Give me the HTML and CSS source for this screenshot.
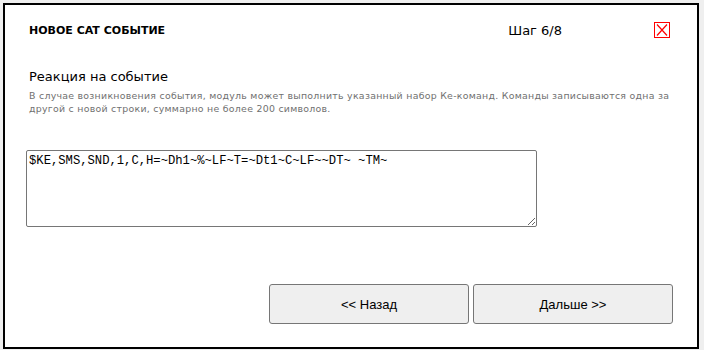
FILE: index.html
```html
<!DOCTYPE html>
<html lang="ru">
<head>
  <meta charset="UTF-8">
  <title>Новое CAT событие</title>
  <link rel="stylesheet" href="styles.css">
</head>
<body>
  <div class="dialog">
    <div class="header">
      <div class="title">НОВОЕ CAT СОБЫТИЕ</div>
      <div class="step">Шаг 6/8</div>
      <div class="close" title="Закрыть">
        <svg width="16" height="16" viewBox="0 0 16 16">
          <rect x="0.5" y="0.5" width="15" height="15" fill="none" stroke="#ff0000"/>
          <path d="M3 2.5 L13 13.5 M13 2.5 L3 13.5" stroke="#ff0000" stroke-width="1.2" fill="none"/>
        </svg>
      </div>
    </div>
    <div class="section">
      <h2>Реакция на событие</h2>
      <p class="hint">В случае возникновения события, модуль может выполнить указанный набор Ке-команд. Команды записываются одна за другой с новой строки, суммарно не более 200 символов.</p>
    </div>
    <textarea id="commands" spellcheck="false">$KE,SMS,SND,1,C,H=~Dh1~%~LF~T=~Dt1~C~LF~~DT~ ~TM~</textarea>
    <div class="buttons">
      <button type="button" id="prevBtn">&lt;&lt; Назад</button>
      <button type="button" id="nextBtn">Дальше &gt;&gt;</button>
    </div>
  </div>
</body>
</html>
```

FILE: styles.css
```css
body {
  margin: 0;
  padding: 0;
  background: #efefef;
  font-family: 'DejaVu Sans', Verdana, sans-serif;
}
.dialog {
  margin: 3px;
  width: 696px;
  height: 346px;
  box-sizing: border-box;
  border: 2px solid #000;
  background: #fff;
  display: flex;
  flex-direction: column;
}
.header {
  display: flex;
  align-items: center;
  padding: 17px 0 0 24px;
  height: 16px;
}
.title {
  flex: 1;
  font-size: 11px;
  font-weight: bold;
  color: #000;
}
.step {
  font-size: 13px;
  color: #000;
  margin-right: 92px;
}
.close {
  width: 16px;
  height: 16px;
  margin-right: 27px;
  cursor: pointer;
}
.close svg {
  display: block;
}
.section {
  padding: 0 24px;
  margin-top: 31px;
}
h2 {
  font-size: 13px;
  font-weight: normal;
  margin: 0;
  color: #000;
  line-height: 16px;
}
.hint {
  margin: 4px 0 0;
  font-size: 9.4px;
  letter-spacing: 0.27px;
  line-height: 13px;
  color: #707070;
}
textarea {
  margin: 35px 0 0 21px;
  width: 511px;
  height: 77px;
  box-sizing: border-box;
  border: 1px solid #767676;
  border-radius: 2px;
  padding: 3px 2px;
  font-family: 'Liberation Mono', monospace;
  font-size: 12.2px;
  resize: both;
}
.buttons {
  display: flex;
  justify-content: flex-end;
  gap: 4px;
  padding-right: 24px;
  margin-top: 57px;
}
button {
  width: 200px;
  height: 40px;
  background: #efefef;
  border: 1px solid #767676;
  border-radius: 3px;
  font-family: 'Liberation Sans', Arial, sans-serif;
  font-size: 13px;
  color: #000;
  cursor: pointer;
}
button:hover {
  background: #e5e5e5;
}
```
